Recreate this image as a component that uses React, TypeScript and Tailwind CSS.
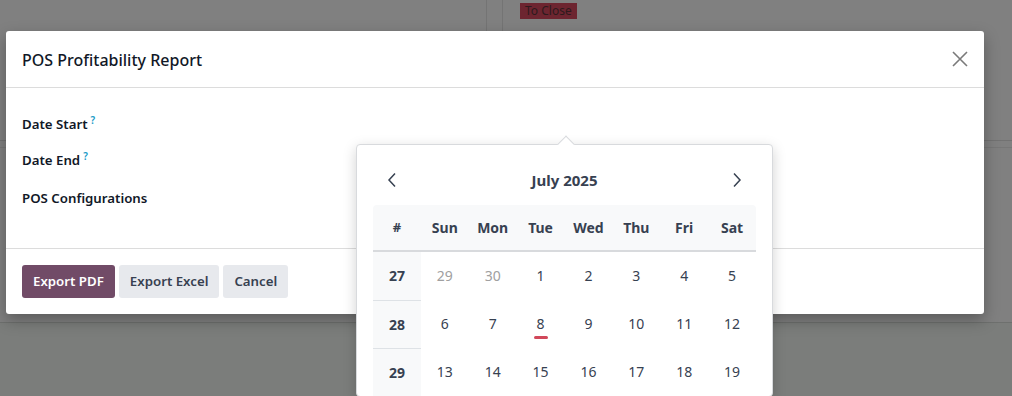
import React from 'react';

const weeks: { num: number; days: { d: number; muted?: boolean; today?: boolean }[] }[] = [
  { num: 27, days: [{ d: 29, muted: true }, { d: 30, muted: true }, { d: 1 }, { d: 2 }, { d: 3 }, { d: 4 }, { d: 5 }] },
  { num: 28, days: [{ d: 6 }, { d: 7 }, { d: 8, today: true }, { d: 9 }, { d: 10 }, { d: 11 }, { d: 12 }] },
  { num: 29, days: [{ d: 13 }, { d: 14 }, { d: 15 }, { d: 16 }, { d: 17 }, { d: 18 }, { d: 19 }] },
];

const dayNames = ['Sun', 'Mon', 'Tue', 'Wed', 'Thu', 'Fri', 'Sat'];

const DatePicker: React.FC = () => (
  <div className="absolute left-[350px] top-[56px] w-[417px] bg-white border border-[#d8dadd] rounded-[4px] shadow-[0_4px_14px_rgba(0,0,0,0.18)] px-4 pt-4 font-normal">
    {/* arrow */}
    <div className="absolute -top-[7px] left-[203px] w-3 h-3 rotate-45 bg-white border-l border-t border-[#d8dadd]" />
    <div className="flex items-center justify-between h-[38px] px-[14px] mb-[6px]">
      <svg width="10" height="16" viewBox="0 0 10 16" fill="none">
        <path d="M8 1.5 L2 8 L8 14.5" stroke="#374151" strokeWidth="1.5" />
      </svg>
      <span className="text-[15px] font-bold text-[#374151]">July 2025</span>
      <svg width="10" height="16" viewBox="0 0 10 16" fill="none">
        <path d="M2 1.5 L8 8 L2 14.5" stroke="#374151" strokeWidth="1.5" />
      </svg>
    </div>
    <div className="grid grid-cols-8 bg-[#f8f9fa] rounded-t-[4px] border-b-2 border-[#d8dadd] h-[47px] items-center text-center text-sm font-bold text-[#374151]">
      <span className="text-[13px]">#</span>
      {dayNames.map((n) => (
        <span key={n}>{n}</span>
      ))}
    </div>
    {weeks.map((w, i) => (
      <div key={w.num} className="grid grid-cols-8 h-12 text-center text-sm text-[#374151]">
        <div className={`flex items-center justify-center bg-[#f8f9fa] font-bold ${i > 0 ? 'border-t border-[#dee2e6]' : ''}`}>
          {w.num}
        </div>
        {w.days.map((d) => (
          <div key={d.d} className={`relative flex items-center justify-center ${d.muted ? 'text-[#a0a0a0]' : ''}`}>
            {d.d}
            {d.today && <span className="absolute left-1/2 -translate-x-1/2 top-[36px] w-[14px] h-[3px] rounded-full bg-[#d1485a]" />}
          </div>
        ))}
      </div>
    ))}
  </div>
);

export default function App() {
  return (
    <div
      className="relative h-[396px] w-[1012px] overflow-hidden bg-[#808080]"
      style={{ fontFamily: '"Noto Sans", "Open Sans", Roboto, sans-serif' }}
    >
      {/* underlying page, behind the backdrop */}
      <div className="flex h-[141px] border-b border-[#727272]">
        <div className="w-[486px]" />
        <div className="w-[17px] h-[31px] border-l border-r border-[#747474]" />
        <div className="pl-[17px] pt-[3px]">
          <span className="block bg-[#6d2530] text-[#2e1a1d] text-[12px] leading-[16px] px-[5px]">To Close</span>
        </div>
      </div>
      <div className="h-[7px] border-b border-[#777777]" />
      <div className="h-[175px] border-b border-[#6e706e]" />
      <div className="h-full bg-[#7b7d7b]" />

      {/* modal */}
      <div className="absolute left-[6px] top-[31px] w-[978px] bg-white rounded-[3px] shadow-[0_6px_16px_rgba(0,0,0,0.3)]">
        <div className="flex items-center justify-between h-[57px] px-4 border-b border-[#dcdcdc]">
          <h4 className="text-[16px] font-medium text-[#111827] pt-[2px]">POS Profitability Report</h4>
          <svg width="16" height="16" viewBox="0 0 16 16">
            <path d="M1 1 L15 15 M15 1 L1 15" stroke="#7a7a7a" strokeWidth="1.6" />
          </svg>
        </div>
        <div className="relative h-[161px] px-4 pt-[27px] border-b border-[#dcdcdc] text-[13.25px] font-semibold text-[#111827]">
          <div className="h-[36px]">
            Date Start<sup className="ml-[3px] text-[#1a9bc7] text-[10px] font-semibold">?</sup>
          </div>
          <div className="h-[38px]">
            Date End<sup className="ml-[3px] text-[#1a9bc7] text-[10px] font-semibold">?</sup>
          </div>
          <div>POS Configurations</div>
          <DatePicker />
        </div>
        <div className="flex gap-1 px-4 pt-4 pb-4 text-[13.25px] font-semibold">
          <button className="h-[33px] px-[11px] rounded-[3px] bg-[#714b67] text-white">Export PDF</button>
          <button className="h-[33px] px-[11px] rounded-[3px] bg-[#e7e9ed] text-[#374151]">Export Excel</button>
          <button className="h-[33px] px-[11px] rounded-[3px] bg-[#e7e9ed] text-[#374151]">Cancel</button>
        </div>
      </div>
    </div>
  );
}
